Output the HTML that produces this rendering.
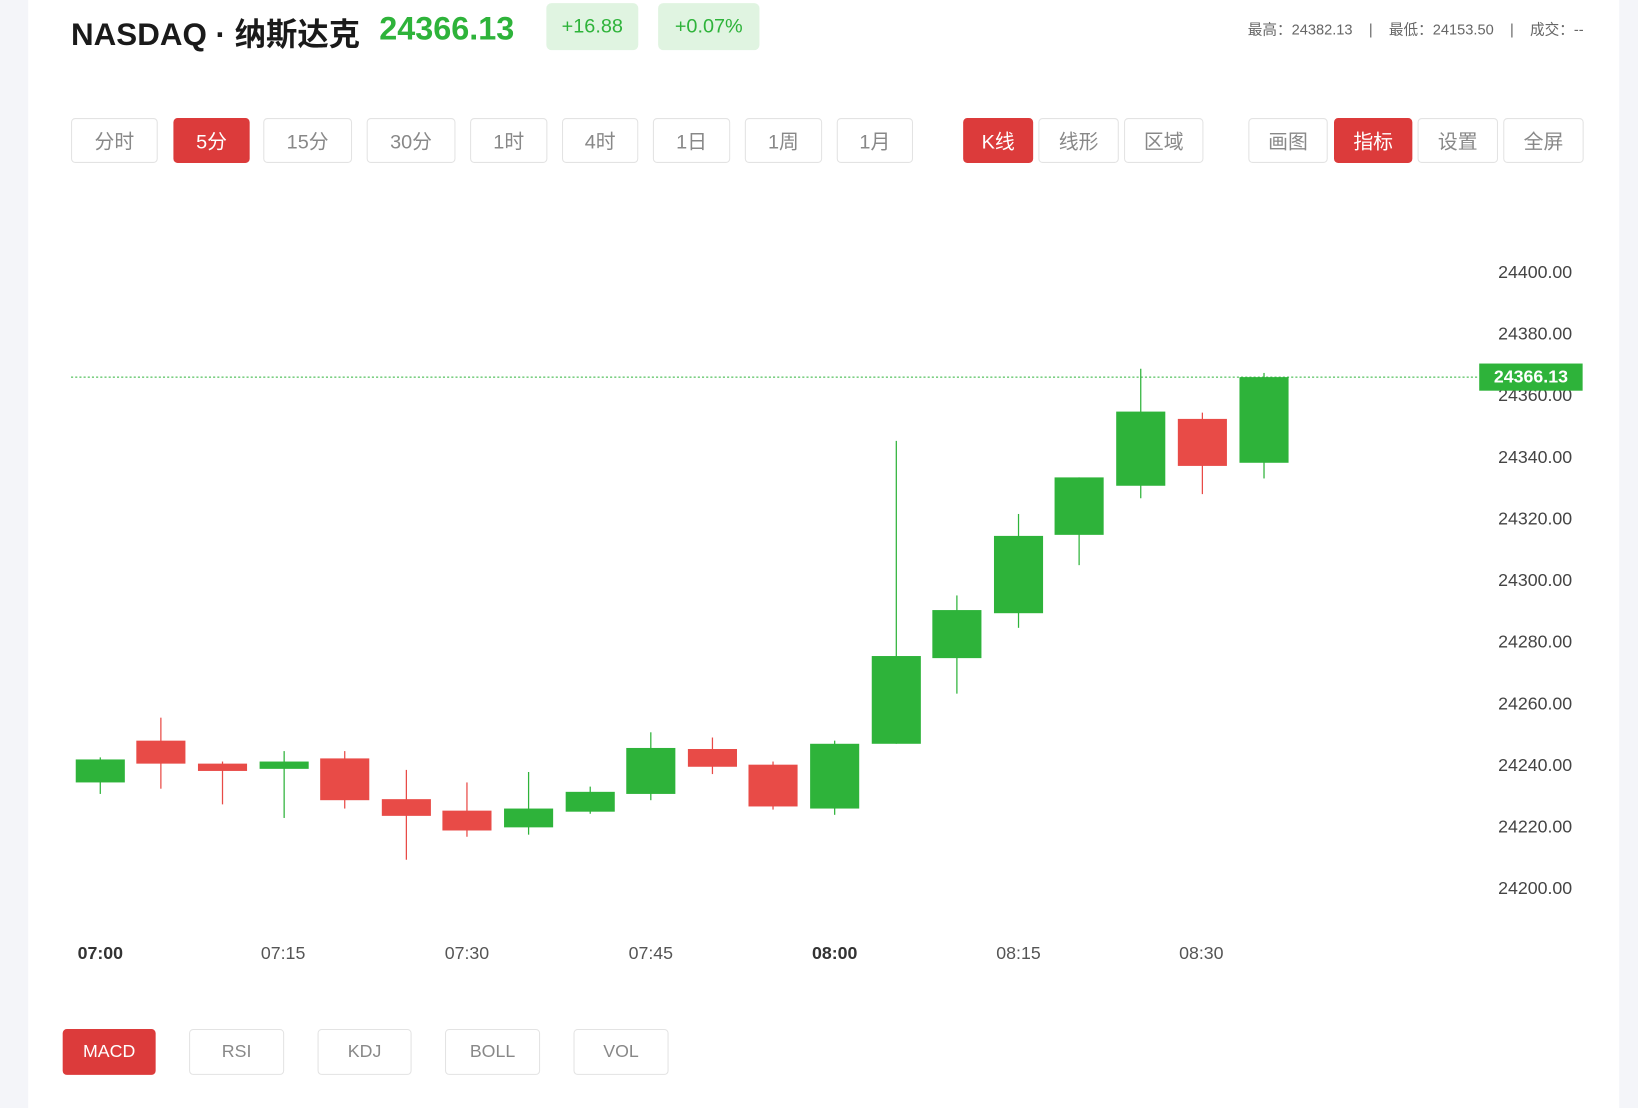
<!DOCTYPE html>
<html><head><meta charset="utf-8"><style>
html,body{margin:0;padding:0;width:1638px;height:1108px;overflow:hidden;background:#f4f5f9;}
#w{position:absolute;left:0;top:0;width:1568px;height:1061px;transform:scale(1.04464);transform-origin:0 0;font-family:"Liberation Sans","Noto Sans CJK SC",sans-serif;}
#main{position:absolute;left:27px;top:0;width:1523px;height:1061px;background:#fff;}
.a{position:absolute;white-space:nowrap;}
.btn{position:absolute;top:113px;height:43px;border:1px solid #e3e3e3;border-radius:4px;box-sizing:border-box;background:#fff;color:#888;font-size:19px;display:flex;align-items:center;justify-content:center;}
.bb{position:absolute;top:985px;height:44px;border:1px solid #e3e3e3;border-radius:4px;box-sizing:border-box;color:#888;font-size:17px;display:flex;align-items:center;justify-content:center;}
.on{background:#dc3b3b;border-color:#dc3b3b;color:#fff;}
.bb.on{color:#fff;}
.yl{position:absolute;right:63px;font-size:17px;color:#444;transform:translateY(-50%);}
.xl{position:absolute;top:903px;font-size:17px;color:#555;font-weight:bold;transform:translateX(-50%);}
</style></head><body><div id="w">
<div id="main"></div>
<div class="a" style="left:68px;top:8px;font-size:30px;font-weight:bold;color:#1a1a1a;">NASDAQ · 纳斯达克</div>
<div class="a" style="left:363px;top:10px;font-size:31px;font-weight:bold;color:#2eb33a;">24366.13</div>
<div class="a" style="left:523px;top:3px;width:88px;height:45px;background:#e0f4e1;border-radius:5px;color:#2eb33a;font-size:19px;display:flex;align-items:center;justify-content:center;">+16.88</div>
<div class="a" style="left:630px;top:3px;width:97px;height:45px;background:#e0f4e1;border-radius:5px;color:#2eb33a;font-size:19px;display:flex;align-items:center;justify-content:center;">+0.07%</div>
<div class="a" style="right:52px;top:18px;font-size:14px;color:#666;">最高：24382.13 &nbsp;&nbsp; | &nbsp;&nbsp; 最低：24153.50 &nbsp;&nbsp; | &nbsp;&nbsp; 成交：--</div>

<div class="btn" style="left:68px;width:83px">分时</div>
<div class="btn on" style="left:166px;width:73px">5分</div>
<div class="btn" style="left:252px;width:85px">15分</div>
<div class="btn" style="left:351px;width:85px">30分</div>
<div class="btn" style="left:450px;width:74px">1时</div>
<div class="btn" style="left:538px;width:73px">4时</div>
<div class="btn" style="left:625px;width:74px">1日</div>
<div class="btn" style="left:713px;width:74px">1周</div>
<div class="btn" style="left:801px;width:73px">1月</div>
<div class="btn on" style="left:922px;width:67px">K线</div>
<div class="btn" style="left:994px;width:77px">线形</div>
<div class="btn" style="left:1076px;width:76px">区域</div>
<div class="btn" style="left:1195px;width:76px">画图</div>
<div class="btn on" style="left:1277px;width:75px">指标</div>
<div class="btn" style="left:1357px;width:77px">设置</div>
<div class="btn" style="left:1439px;width:77px">全屏</div>

<div class="yl" style="top:261px">24400.00</div>
<div class="yl" style="top:320px">24380.00</div>
<div class="yl" style="top:379px">24360.00</div>
<div class="yl" style="top:438px">24340.00</div>
<div class="yl" style="top:497px">24320.00</div>
<div class="yl" style="top:556px">24300.00</div>
<div class="yl" style="top:615px">24280.00</div>
<div class="yl" style="top:674px">24260.00</div>
<div class="yl" style="top:733px">24240.00</div>
<div class="yl" style="top:792px">24220.00</div>
<div class="yl" style="top:851px">24200.00</div>

<svg class="a" style="left:0;top:0" width="1568" height="1061">
<line x1="68" y1="361" x2="1416" y2="361" stroke="#2eb33a" stroke-width="1" stroke-dasharray="2,2"/>
<g stroke-width="1.2">
<line x1="96" y1="725" x2="96" y2="760" stroke="#2eb33a"/><rect x="72.5" y="727" width="47" height="22" fill="#2eb33a"/>
<line x1="154" y1="687" x2="154" y2="755" stroke="#e84b47"/><rect x="130.5" y="709" width="47" height="22" fill="#e84b47"/>
<line x1="213" y1="729" x2="213" y2="770" stroke="#e84b47"/><rect x="189.5" y="731" width="47" height="7" fill="#e84b47"/>
<line x1="272" y1="719" x2="272" y2="783" stroke="#2eb33a"/><rect x="248.5" y="729" width="47" height="7" fill="#2eb33a"/>
<line x1="330" y1="719" x2="330" y2="774" stroke="#e84b47"/><rect x="306.5" y="726" width="47" height="40" fill="#e84b47"/>
<line x1="389" y1="737" x2="389" y2="823" stroke="#e84b47"/><rect x="365.5" y="765" width="47" height="16" fill="#e84b47"/>
<line x1="447" y1="749" x2="447" y2="801" stroke="#e84b47"/><rect x="423.5" y="776" width="47" height="19" fill="#e84b47"/>
<line x1="506" y1="739" x2="506" y2="799" stroke="#2eb33a"/><rect x="482.5" y="774" width="47" height="18" fill="#2eb33a"/>
<line x1="565" y1="753" x2="565" y2="779" stroke="#2eb33a"/><rect x="541.5" y="758" width="47" height="19" fill="#2eb33a"/>
<line x1="623" y1="701" x2="623" y2="766" stroke="#2eb33a"/><rect x="599.5" y="716" width="47" height="44" fill="#2eb33a"/>
<line x1="682" y1="706" x2="682" y2="741" stroke="#e84b47"/><rect x="658.5" y="717" width="47" height="17" fill="#e84b47"/>
<line x1="740" y1="729" x2="740" y2="775" stroke="#e84b47"/><rect x="716.5" y="732" width="47" height="40" fill="#e84b47"/>
<line x1="799" y1="709" x2="799" y2="780" stroke="#2eb33a"/><rect x="775.5" y="712" width="47" height="62" fill="#2eb33a"/>
<line x1="858" y1="422" x2="858" y2="712" stroke="#2eb33a"/><rect x="834.5" y="628" width="47" height="84" fill="#2eb33a"/>
<line x1="916" y1="570" x2="916" y2="664" stroke="#2eb33a"/><rect x="892.5" y="584" width="47" height="46" fill="#2eb33a"/>
<line x1="975" y1="492" x2="975" y2="601" stroke="#2eb33a"/><rect x="951.5" y="513" width="47" height="74" fill="#2eb33a"/>
<line x1="1033" y1="457" x2="1033" y2="541" stroke="#2eb33a"/><rect x="1009.5" y="457" width="47" height="55" fill="#2eb33a"/>
<line x1="1092" y1="353" x2="1092" y2="477" stroke="#2eb33a"/><rect x="1068.5" y="394" width="47" height="71" fill="#2eb33a"/>
<line x1="1151" y1="395" x2="1151" y2="473" stroke="#e84b47"/><rect x="1127.5" y="401" width="47" height="45" fill="#e84b47"/>
<line x1="1210" y1="357" x2="1210" y2="458" stroke="#2eb33a"/><rect x="1186.5" y="361" width="47" height="82" fill="#2eb33a"/>
</g>
</svg>
<div class="a" style="left:1416px;top:348px;width:99px;height:26px;background:#2eb33a;color:#fff;font-size:17px;font-weight:bold;display:flex;align-items:center;justify-content:center;">24366.13</div>

<div class="xl" style="left:96px;color:#333">07:00</div>
<div class="xl" style="left:271px;font-weight:normal">07:15</div>
<div class="xl" style="left:447px;font-weight:normal">07:30</div>
<div class="xl" style="left:623px;font-weight:normal">07:45</div>
<div class="xl" style="left:799px;color:#333">08:00</div>
<div class="xl" style="left:975px;font-weight:normal">08:15</div>
<div class="xl" style="left:1150px;font-weight:normal">08:30</div>

<div class="bb on" style="left:60px;width:89px">MACD</div>
<div class="bb" style="left:181px;width:91px">RSI</div>
<div class="bb" style="left:304px;width:90px">KDJ</div>
<div class="bb" style="left:426px;width:91px">BOLL</div>
<div class="bb" style="left:549px;width:91px">VOL</div>
</div></body></html>
